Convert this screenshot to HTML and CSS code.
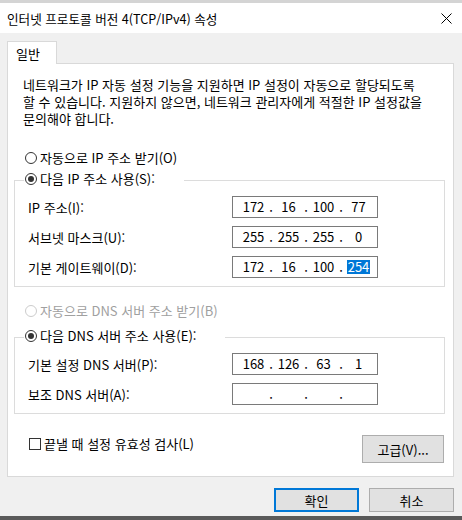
FILE: index.html
```html
<!DOCTYPE html>
<html lang="ko">
<head>
    <meta charset="UTF-8">
    <title>인터넷 프로토콜 버전 4(TCP/IPv4) 속성</title>
    <link rel="stylesheet" href="styles.css">
</head>
<body>
    <div class="window">
        <div class="titlebar">
            <span class="title">인터넷 프로토콜 버전 4(TCP/IPv4) 속성</span>
            <svg class="close" viewBox="0 0 11 11" xmlns="http://www.w3.org/2000/svg">
                <path d="M0.5 0.5L10.5 10.5M10.5 0.5L0.5 10.5" stroke="#000" stroke-width="1" fill="none"/>
            </svg>
        </div>
        <div class="content">
            <div class="tabs">
                <div class="tab">일반</div>
            </div>
            <div class="panel">
                <p class="desc">네트워크가 IP 자동 설정 기능을 지원하면 IP 설정이 자동으로 할당되도록<br>할 수 있습니다. 지원하지 않으면, 네트워크 관리자에게 적절한 IP 설정값을<br>문의해야 합니다.</p>

                <div class="option first"><span class="radio"></span>자동으로 IP 주소 받기(O)</div>

                <fieldset class="group">
                    <legend class="caption"><span class="radio checked"></span>다음 IP 주소 사용(S):</legend>
                    <div class="row">
                        <span class="label">IP 주소(I):</span>
                        <div class="ipbox"><span class="oct">172</span><span class="dot">.</span><span class="oct">16</span><span class="dot">.</span><span class="oct">100</span><span class="dot">.</span><span class="oct">77</span></div>
                    </div>
                    <div class="row">
                        <span class="label">서브넷 마스크(U):</span>
                        <div class="ipbox"><span class="oct">255</span><span class="dot">.</span><span class="oct">255</span><span class="dot">.</span><span class="oct">255</span><span class="dot">.</span><span class="oct">0</span></div>
                    </div>
                    <div class="row">
                        <span class="label">기본 게이트웨이(D):</span>
                        <div class="ipbox"><span class="oct">172</span><span class="dot">.</span><span class="oct">16</span><span class="dot">.</span><span class="oct">100</span><span class="dot">.</span><span class="oct"><span class="sel">254</span></span></div>
                    </div>
                </fieldset>

                <div class="option disabled"><span class="radio"></span>자동으로 DNS 서버 주소 받기(B)</div>

                <fieldset class="group dns">
                    <legend class="caption"><span class="radio checked"></span>다음 DNS 서버 주소 사용(E):</legend>
                    <div class="row">
                        <span class="label">기본 설정 DNS 서버(P):</span>
                        <div class="ipbox"><span class="oct">168</span><span class="dot">.</span><span class="oct">126</span><span class="dot">.</span><span class="oct">63</span><span class="dot">.</span><span class="oct">1</span></div>
                    </div>
                    <div class="row">
                        <span class="label">보조 DNS 서버(A):</span>
                        <div class="ipbox"><span class="oct"></span><span class="dot">.</span><span class="oct"></span><span class="dot">.</span><span class="oct"></span><span class="dot">.</span><span class="oct"></span></div>
                    </div>
                </fieldset>

                <div class="bottom">
                    <label class="check"><span class="box"></span>끝낼 때 설정 유효성 검사(L)</label>
                    <button class="btn advanced">고급(V)...</button>
                </div>
            </div>
            <div class="buttons">
                <button class="btn default">확인</button>
                <button class="btn">취소</button>
            </div>
        </div>
    </div>
</body>
</html>
```

FILE: styles.css
```css
* {
    box-sizing: border-box;
}
body {
    margin: 0;
    font-family: "Noto Sans CJK KR", "Noto Sans", sans-serif;
    font-size: 13px;
    color: #000;
    background: #f0f0f0;
}
.window {
    width: 462px;
    height: 520px;
    border-top: 3px solid #d4d4d4;
    border-bottom: 4px solid #5a5a5a;
    background: #f0f0f0;
    display: flex;
    flex-direction: column;
}
.titlebar {
    height: 30px;
    background: #fff;
    display: flex;
    align-items: center;
    justify-content: space-between;
    padding: 0 10px 0 7px;
}
.title {
    font-size: 12.6px;
    line-height: 17px;
}
.close {
    width: 11px;
    height: 11px;
}
.content {
    padding: 8px 8px 0 7px;
}
.tabs {
    display: flex;
}
.tab {
    position: relative;
    width: 50px;
    height: 23px;
    margin-bottom: -1px;
    padding: 3px 0 0 8px;
    line-height: 17px;
    background: #fff;
    border: 1px solid #d9d9d9;
    border-bottom: none;
}
.panel {
    height: 414px;
    background: #fff;
    border: 1px solid #d9d9d9;
    display: flex;
    flex-direction: column;
}
.desc {
    margin: 12px 0 0 15px;
    line-height: 17px;
    white-space: nowrap;
}
.option {
    display: flex;
    align-items: center;
    height: 17px;
    padding-left: 17px;
}
.option.first {
    margin-top: 22px;
}
.option.disabled {
    margin-top: 15px;
    color: #a0a0a0;
}
.radio {
    width: 12px;
    height: 12px;
    margin-right: 3px;
    border: 1px solid #333;
    border-radius: 50%;
    background: #fff;
    display: flex;
    align-items: center;
    justify-content: center;
    flex-shrink: 0;
}
.radio.checked::after {
    content: "";
    width: 6px;
    height: 6px;
    border-radius: 50%;
    background: #333;
}
.disabled .radio {
    border-color: #cccccc;
}
.group {
    margin: 4px 8px 0 6px;
    padding: 5px 0 8px 13px;
    border: 1px solid #dcdcdc;
    min-width: 0;
    display: flex;
    flex-direction: column;
    gap: 8px;
}
.group.dns {
    margin-top: 8px;
}
.caption {
    display: flex;
    align-items: center;
    height: 21px;
    margin-left: -4px;
    padding: 0 29px 4px 1px;
    line-height: 17px;
    background: #fff;
}
.row {
    display: flex;
    align-items: center;
    height: 22px;
}
.label {
    width: 204px;
    flex-shrink: 0;
}
.ipbox {
    width: 146px;
    height: 22px;
    padding-left: 6px;
    border: 1px solid #7a7a7a;
    display: flex;
    align-items: center;
}
.oct {
    width: 29px;
    text-align: center;
    line-height: 14px;
}
.dot {
    width: 6px;
    text-align: center;
    line-height: 14px;
}
.sel {
    display: inline-block;
    background: #0078d7;
    color: #fff;
    padding: 0 1px;
}
.bottom {
    margin-top: 21px;
    padding: 0 9px 0 21px;
    display: flex;
    justify-content: space-between;
    align-items: flex-start;
}
.check {
    display: flex;
    align-items: center;
    line-height: 17px;
}
.check .box {
    width: 12px;
    height: 12px;
    margin-right: 3px;
    border: 1px solid #333;
    background: #fff;
}
.btn {
    height: 24px;
    width: 85px;
    padding: 0;
    font-family: inherit;
    font-size: 13px;
    color: #000;
    background: #e1e1e1;
    border: 1px solid #adadad;
    border-radius: 0;
}
.btn.advanced {
    width: 82px;
    height: 28px;
}
.btn.default {
    border: 2px solid #0078d7;
}
.buttons {
    margin-top: 11px;
    display: flex;
    justify-content: flex-end;
    gap: 10px;
}
```
